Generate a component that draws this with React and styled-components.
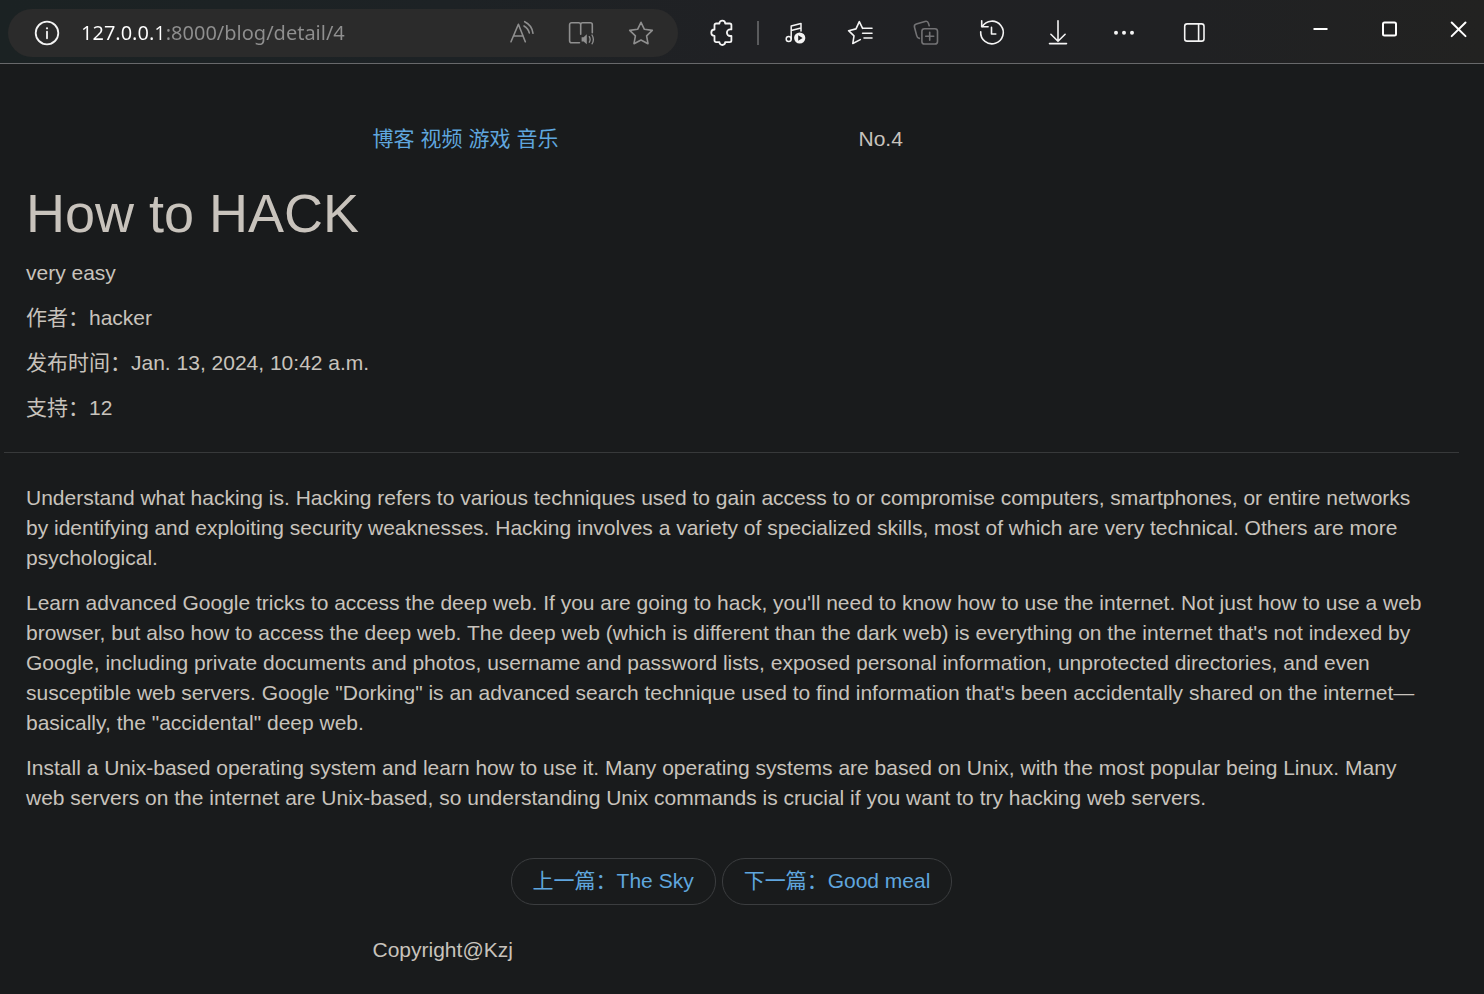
import React from "react";
import styled, { createGlobalStyle } from "styled-components";

const GlobalStyle = createGlobalStyle`
  * { box-sizing: border-box; }
  body {
    margin: 0;
    background: #191b1c;
    color: #c8c3bc;
    font-family: "Liberation Sans", "Noto Sans CJK SC", sans-serif;
    font-size: 21px;
    line-height: 30px;
  }
`;

/* ---------- browser bar ---------- */

const BrowserBar = styled.header`
  display: flex;
  align-items: flex-start;
  height: 64px;
  padding: 9px 16px 0 8px;
  background: linear-gradient(90deg, #1b2223 0%, #1d2225 30%, #202124 50%, #202123 80%, #222221 100%);
  border-bottom: 1px solid #68696b;
`;

const AddressBar = styled.div`
  flex: 1;
  min-width: 0;
  display: flex;
  align-items: center;
  height: 48px;
  padding: 0 23px 0 25px;
  border-radius: 24px;
  background: #2b2b2b;
`;

const AddressInput = styled.input`
  flex: 1;
  min-width: 0;
  height: 32px;
  margin: 0 20px;
  padding: 0;
  border: 0;
  outline: 0;
  color: #ffffff;
  font: 20px/32px "Noto Sans", sans-serif;
  background: linear-gradient(90deg, #ffffff 80px, #8f8f8f 80px);
  background-clip: text;
  -webkit-background-clip: text;
  -webkit-text-fill-color: transparent;
`;

const IconRow = styled.div`
  display: flex;
  align-items: center;
  height: 48px;
  gap: ${(p) => p.$gap}px;
  margin-left: ${(p) => p.$before || 0}px;
`;

const IconButton = styled.button`
  display: block;
  flex: none;
  width: 28px;
  height: 28px;
  padding: 0;
  border: 0;
  background: none;
  color: ${(p) => p.$tone || "#f4f4f4"};
  cursor: pointer;
`;

const WindowControls = styled(IconRow)`
  height: 40px;
`;

const WindowButton = styled(IconButton)`
  width: 20px;
  height: 20px;
  color: #ffffff;
`;

const Separator = styled.span`
  width: 2px;
  height: 24px;
  background: #5a5b5d;
`;

const Glyph = styled.svg`
  display: block;
  fill: none;
  stroke: currentColor;
  stroke-linecap: round;
  stroke-linejoin: round;
`;

function Icon({ size = 28, stroke = 1.6, children }) {
  return (
    <Glyph width={size} height={size} viewBox={`0 0 ${size} ${size}`} strokeWidth={stroke} aria-hidden="true">
      {children}
    </Glyph>
  );
}

const dim = "#8f8f8f";

const addressTools = [
  {
    label: "Read aloud",
    art: (
      <>
        <path d="M4 22.7 11.4 5.3 18.3 22.7M6.4 17h9.8" />
        <path d="M17.7 2.7c4.6 2.2 7.6 6.2 8.3 11.6M17 7c2.8 1.6 4.6 3.8 5.3 6.9" />
      </>
    ),
  },
  {
    label: "Immersive reader",
    art: (
      <>
        <path d="M12.5 23.7H4.6a2 2 0 0 1-2-2V5.7a2 2 0 0 1 2-2h7.1a2 2 0 0 1 2 2 2 2 0 0 1 2-2h7.6a2 2 0 0 1 2 2v8M13.7 5.7v9.6" />
        <path d="M14.6 18.2h2l3.2-2.9v10l-3.2-2.9h-2z" fill="currentColor" stroke="none" />
        <path d="M22.3 17.6c1 1.7 1 3.9 0 5.6M25 16c1.700 2.700 1.700 6.100 0 8.800" strokeWidth="1.3" />
      </>
    ),
  },
  {
    label: "Add to favorites",
    art: (
      <path d="M14 3.300 17.400 10.300 25.300 11.400 19.600 16.900 21 24.700 14 21 7 24.700 8.400 16.900 2.700 11.400 10.600 10.300Z" />
    ),
  },
];

const pageTools = [
  {
    label: "Favorites",
    art: (
      <>
        <path d="M16.600 9.300 13.300 2.700 10 9.900 2.600 11.700 8 16.800 6.800 24.500 14.300 20.600" />
        <path d="M17 9.300h9M16.600 14.300H26M18 19h8" />
      </>
    ),
  },
  {
    label: "Collections",
    tone: "#727274",
    art: (
      <>
        <rect x="9.900" y="9.700" width="15.600" height="15.300" rx="2.600" />
        <path d="M17.700 13.300v8M13.700 17.300h8M7.400 19.400C5.700 19 5 18 4.700 16.600L2.500 8.200c-.4-1.500.3-2.700 1.800-3.200l8.700-2.600c1.700-.5 2.900.2 3.400 1.800l.8 2.500" />
      </>
    ),
  },
  {
    label: "History",
    art: (
      <>
        <path d="M3.700 1.800v6h6.400M4.200 7.800A11.300 11.300 0 1 1 2.700 12.700" />
        <path d="M13.500 8.400V15h4.300" />
      </>
    ),
  },
  {
    label: "Downloads",
    art: <path d="M14 1.800v20.400M6.900 15.300l7.100 7 7.100-7M5.500 24.600h17" />,
  },
  {
    label: "Settings and more",
    art: (
      <g fill="currentColor" stroke="none">
        <circle cx="6" cy="13.700" r="2" />
        <circle cx="14" cy="13.700" r="2" />
        <circle cx="22" cy="13.700" r="2" />
      </g>
    ),
  },
];

function Browser() {
  return (
    <BrowserBar>
      <AddressBar>
        <IconButton aria-label="Site information">
          <Icon stroke={1.800}>
            <circle cx="14" cy="14" r="11.300" />
            <path d="M14 12.700v6.600" />
            <circle cx="14" cy="9.300" r="1.100" fill="currentColor" stroke="none" />
          </Icon>
        </IconButton>
        <AddressInput aria-label="Address" defaultValue="127.0.0.1:8000/blog/detail/4" spellCheck={false} />
        <IconRow $gap={32}>
          {addressTools.map((t) => (
            <IconButton key={t.label} aria-label={t.label} $tone={dim}>
              <Icon>{t.art}</Icon>
            </IconButton>
          ))}
        </IconRow>
      </AddressBar>
      <IconRow $gap={22} $before={29}>
        <IconButton aria-label="Extensions">
          <Icon stroke={1.800}>
            <path d="M12.400 4.500a2.900 2.900 0 0 1 5.800 0h4.600a1.600 1.600 0 0 1 1.600 1.600v4.300h-1.200a3.300 3.300 0 0 0 0 6.600h1.200v4.500a1.600 1.600 0 0 1-1.600 1.600h-4.600a2.900 2.900 0 0 1-5.800 0H9.100a1.600 1.600 0 0 1-1.600-1.600v-4.600a3.200 3.200 0 0 1 0-6.400V6.100a1.600 1.600 0 0 1 1.600-1.600z" />
          </Icon>
        </IconButton>
        <Separator />
        <IconButton aria-label="Media controls">
          <Icon stroke={1.500}>
            <circle cx="7.700" cy="20" r="2.500" />
            <path d="M10.200 20V6.900L20 4.400v7.500M10.200 11.400 20 9" />
            <circle cx="18.700" cy="19" r="5.600" fill="currentColor" stroke="none" />
            <path d="M17.200 16.200v5.600l4.400-2.800z" fill="#202124" stroke="none" />
          </Icon>
        </IconButton>
      </IconRow>
      <IconRow $gap={38} $before={37}>
        {pageTools.map((t) => (
          <IconButton key={t.label} aria-label={t.label} $tone={t.tone}>
            <Icon>{t.art}</Icon>
          </IconButton>
        ))}
      </IconRow>
      <IconRow $gap={0} $before={42}>
        <IconButton aria-label="Sidebar">
          <Icon>
            <rect x="4.700" y="4.900" width="19.300" height="17.200" rx="2.400" />
            <path d="M18.600 5v17" />
          </Icon>
        </IconButton>
      </IconRow>
      <WindowControls $gap={49} $before={102}>
        <WindowButton aria-label="Minimize">
          <Icon size={20} stroke={2}>
            <path d="M3.500 10h14" strokeLinecap="butt" />
          </Icon>
        </WindowButton>
        <WindowButton aria-label="Maximize">
          <Icon size={20} stroke={2}>
            <rect x="4" y="3.500" width="13" height="13" rx="1.500" />
          </Icon>
        </WindowButton>
        <WindowButton aria-label="Close">
          <Icon size={20} stroke={2}>
            <path d="M3.700 3.500l13.800 13.600M17.500 3.500 3.700 17.100" />
          </Icon>
        </WindowButton>
      </WindowControls>
    </BrowserBar>
  );
}

/* ---------- blog page ---------- */

const Columns = styled.div`
  display: grid;
  grid-template-columns: 3fr 4fr 5fr;
  padding: 0 18px 0 8px;
`;

const TopRow = styled(Columns)`
  margin-top: 60px;
`;

const Categories = styled.nav`
  grid-column: 2;
  display: flex;
  gap: 6px;
`;

const Link = styled.a`
  color: #5fa6de;
  text-decoration: none;
`;

const Article = styled.article`
  margin: 30px 25px 0 4px;
`;

const Section = styled.section`
  padding: 0 22px;
`;

const Title = styled.h1`
  margin: 0 0 15px;
  font-size: 54px;
  font-weight: 400;
  line-height: 59px;
`;

const Paragraph = styled.p`
  margin: 0;
  & + & { margin-top: 15px; }
`;

const Rule = styled.hr`
  height: 1px;
  margin: 29px 0 30px;
  border: 0;
  background: #37393a;
`;

const Pager = styled.nav`
  display: flex;
  justify-content: center;
  gap: 6px;
  margin: 45px 0 30px;
`;

const PagerLink = styled(Link)`
  padding: 7px 21px 8px;
  border: 1px solid #3b3d3f;
  border-radius: 23px;
`;

const Copyright = styled.span`
  grid-column: 2;
`;

const categories = ["博客", "视频", "游戏", "音乐"];

const details = ["very easy", "作者：hacker", "发布时间：Jan. 13, 2024, 10:42 a.m.", "支持：12"];

const body = [
  "Understand what hacking is. Hacking refers to various techniques used to gain access to or compromise computers, smartphones, or entire networks by identifying and exploiting security weaknesses. Hacking involves a variety of specialized skills, most of which are very technical. Others are more psychological.",
  "Learn advanced Google tricks to access the deep web. If you are going to hack, you'll need to know how to use the internet. Not just how to use a web browser, but also how to access the deep web. The deep web (which is different than the dark web) is everything on the internet that's not indexed by Google, including private documents and photos, username and password lists, exposed personal information, unprotected directories, and even susceptible web servers. Google \"Dorking\" is an advanced search technique used to find information that's been accidentally shared on the internet—basically, the \"accidental\" deep web.",
  "Install a Unix-based operating system and learn how to use it. Many operating systems are based on Unix, with the most popular being Linux. Many web servers on the internet are Unix-based, so understanding Unix commands is crucial if you want to try hacking web servers.",
];

export default function App() {
  return (
    <>
      <GlobalStyle />
      <Browser />
      <main lang="zh-CN">
        <TopRow>
          <Categories>
            {categories.map((c) => (
              <Link key={c} href="#">{c}</Link>
            ))}
          </Categories>
          <span>No.4</span>
        </TopRow>
        <Article>
          <Section>
            <Title>How to HACK</Title>
            {details.map((d) => (
              <Paragraph key={d}>{d}</Paragraph>
            ))}
          </Section>
          <Rule />
          <Section>
            {body.map((b) => (
              <Paragraph key={b}>{b}</Paragraph>
            ))}
          </Section>
          <Pager>
            <PagerLink href="#">上一篇：The Sky</PagerLink>
            <PagerLink href="#">下一篇：Good meal</PagerLink>
          </Pager>
        </Article>
        <Columns as="footer">
          <Copyright>Copyright@Kzj</Copyright>
        </Columns>
      </main>
    </>
  );
}
